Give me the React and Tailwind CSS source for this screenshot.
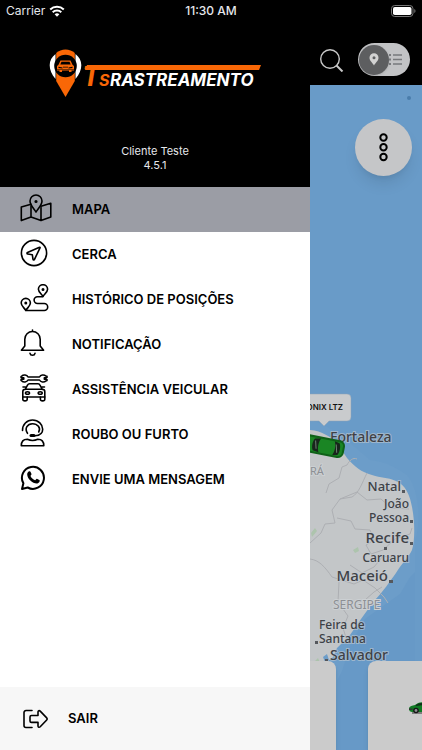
import React, { useState } from 'react';
import clsx from 'clsx';

const Icon = ({ children }) => (
  <svg
    viewBox="0 0 32 28"
    className="mb-1 h-7 w-8 shrink-0"
    fill="none"
    stroke="currentColor"
    strokeWidth="1.6"
    strokeLinecap="round"
    strokeLinejoin="round"
    aria-hidden="true"
  >
    {children}
  </svg>
);

const MapIcon = () => (
  <Icon>
    <path d="M11 10.3 1.3 13v13.6L11 23l10 3.6L30.8 23V9.3L21 12.3M11 12v11M21 13.5v13" />
    <path d="M16 18c-1.8-3-6-6.800-6-11a6 6 0 0 1 12 0c0 4.200-4.200 8-6 11z" />
    <circle cx="16" cy="7.500" r=".8" fill="currentColor" />
  </Icon>
);

const FenceIcon = () => (
  <Icon>
    <circle cx="14" cy="14" r="12.600" />
    <path d="M19.500 8.300 7.500 13.500c-.8.4-.6 1.400.2 1.500l4.600.7.700 4.600c.2.800 1.200.9 1.500.1l5.500-11.600c.2-.4-.1-.7-.5-.5z" />
  </Icon>
);

const RouteIcon = () => (
  <Icon>
    <path d="M23 12.500c-1.300-2.300-4.600-4.400-4.600-7.200a4.600 4.600 0 0 1 9.200 0c0 2.800-3.300 4.900-4.600 7.200z" />
    <path d="M5.800 26.500C4.500 24 1.200 22 1.200 19a4.600 4.600 0 0 1 9.200 0c0 3-3.300 5-4.600 7.500z" />
    <path d="M22.500 12.700h-5a3.400 3.400 0 0 0 0 6.800h6.700a3.500 3.500 0 0 1 0 7H6" />
    <circle cx="23" cy="5.500" r=".7" fill="currentColor" />
    <circle cx="5.800" cy="19" r=".7" fill="currentColor" />
  </Icon>
);

const BellIcon = () => (
  <Icon>
    <path d="M12.500 1v1.500M4.800 17v-6.800c0-4.300 3.400-7.700 7.700-7.700s7.700 3.400 7.700 7.700V17l3.400 4.200H1.400L4.800 17z" />
    <path d="M10 24.300c.5 2.600 4.500 2.600 5 0" />
  </Icon>
);

const AssistIcon = () => (
  <Icon>
    <path
      strokeWidth="1.500"
      d="M8 3h11.500c1-2.200 4.500-2.700 6.500-.9 1.500 0 1.500 1.600.3 1.600h-2v1.600h2c1.200 0 1.200 1.600-.3 1.600-2 1.800-5.500 1.300-6.500-.9H8C7 8.200 3.500 8.700 1.700 6.900c-1.200-.4-.9-1.600.1-1.600h2V3.700h-2c-1 0-1.300-1.200-.1-1.600C3.500.3 7 .8 8 3z"
    />
    <path d="m5.200 15.300 2.300-4.200c.5-.9 1-1.400 2-1.400h8.500c1 0 1.600.5 2 1.400l2.300 4.200M2.800 23v-5.300c0-1.400.9-2.400 2.400-2.400h17.100c1.500 0 2.500 1 2.500 2.400V23h-22zM3 13h2.500M22 13h2.500" />
    <path d="M2.800 23v2.200c0 2.200 4.400 2.200 4.400 0V23M20.400 23v2.200c0 2.200 4.400 2.200 4.400 0V23" />
    <ellipse cx="7.500" cy="19" rx="2" ry="1.300" />
    <ellipse cx="20.200" cy="19" rx="2" ry="1.300" />
  </Icon>
);

const SupportIcon = () => (
  <Icon>
    <path d="M2.500 11.500C2.300 5.500 7 1 12.500 1c6 0 10.200 4.500 10.200 9.300 0 3.700-3 6.200-7.700 6.500" />
    <path d="M7.500 14.300C4.200 9.500 7.500 4.700 12.500 4.700s8.700 4.300 6.200 8.300" />
    <path d="M11 16.500h3" strokeWidth="3" />
    <path d="M1.300 26.700c0-4.200 2-6.400 6-6.400 3 1.300 7.500 1.300 10.500 0 4 0 6 2.200 6 6.400H1.300z" />
  </Icon>
);

const WhatsIcon = () => (
  <Icon>
    <path strokeWidth="2" d="M2 25 3.400 19.300A11 11 0 1 1 7.700 23.500L2 25z" />
    <path
      fill="currentColor"
      stroke="none"
      d="M8.700 7.600c.6-.6 1.500-.6 1.800.2l1 2.300c.2.600-.9 1.500-1 1.900.9 2 2.500 3.500 4.600 4.200.5 0 1.300-1.600 1.800-1.400l2.400 1.200c1.200.6-.2 3.200-2 3.400-4.500.4-10-4.700-10.100-9 0-1.200.6-2.100 1.500-2.800z"
    />
  </Icon>
);

const menuItems = [
  { id: 'mapa', label: 'MAPA', icon: MapIcon },
  { id: 'cerca', label: 'CERCA', icon: FenceIcon },
  { id: 'historico', label: 'HISTÓRICO DE POSIÇÕES', icon: RouteIcon },
  { id: 'notificacao', label: 'NOTIFICAÇÃO', icon: BellIcon },
  { id: 'assistencia', label: 'ASSISTÊNCIA VEICULAR', icon: AssistIcon },
  { id: 'roubo', label: 'ROUBO OU FURTO', icon: SupportIcon },
  { id: 'mensagem', label: 'ENVIE UMA MENSAGEM', icon: WhatsIcon },
];

const cities = [
  { name: 'Natal', x: 91, y: 406, size: 13, anchor: 'end' },
  { name: 'João', x: 99, y: 423, size: 12, anchor: 'end' },
  { name: 'Pessoa', x: 99, y: 437, size: 12, anchor: 'end' },
  { name: 'Recife', x: 99, y: 458, size: 15, anchor: 'end' },
  { name: 'Caruaru', x: 99, y: 477, size: 12, anchor: 'end' },
  { name: 'Maceió', x: 78, y: 496, size: 15, anchor: 'end' },
  { name: 'Fortaleza', x: 20, y: 357, size: 14, anchor: 'start' },
  { name: 'Feira de', x: 9, y: 544, size: 12, anchor: 'start' },
  { name: 'Santana', x: 9, y: 558, size: 12, anchor: 'start' },
  { name: 'Salvador', x: 20, y: 575, size: 14, anchor: 'start' },
];

const StatusBar = () => (
  <div className="grid h-[22px] grid-cols-3 items-center px-[6px] text-xs text-gray-200">
    <div className="flex items-center gap-1">
      <span>Carrier</span>
      <svg viewBox="0 0 16 12" className="h-3 w-4" fill="none" stroke="white" strokeWidth="2" aria-hidden="true">
        <path d="M1.200 4.500a9.800 9.800 0 0 1 13.600 0M3.700 7.200a6.200 6.200 0 0 1 8.600 0" />
        <path d="M8 11.800 5.600 9.300a3.500 3.500 0 0 1 4.800 0z" fill="white" stroke="none" />
      </svg>
    </div>
    <span className="text-center font-medium">11:30 AM</span>
    <svg viewBox="0 0 25 12" className="h-3 w-[25px] justify-self-end" aria-hidden="true">
      <rect x=".5" y=".5" width="21.500" height="11" rx="3.200" fill="none" stroke="#777" />
      <rect x="2" y="2" width="18.500" height="8" rx="1.800" fill="white" />
      <path d="M23.300 4v4c1.600-.7 1.600-3.300 0-4z" fill="#777" />
    </svg>
  </div>
);

const Logo = () => (
  <svg viewBox="0 0 212 48" className="h-12 w-[212px]" role="img" aria-label="TS Rastreamento">
    <path d="M6.500 5C-1 11-1.500 20 6.500 30zM26.500 5c7.500 6 8 15 0 25z" fill="white" />
    <path d="M7.200 4C12-.7 21-.7 25.800 4v28L16.500 48 7.200 32z" fill="#f96706" />
    <circle cx="16.500" cy="17" r="11.300" fill="black" />
    <path
      d="M11.500 11.500h10l2 4.200 1.500 1.300v4.500h-2.500V23H20v-1.500h-7V23h-2.500v-1.500H8V17l1.500-1.300 2-4.200z"
      fill="#f96706"
    />
    <path d="M12.500 12.800h8l1.200 2.600H11.300zM9.500 17.700l4 .8v1l-4-.5zM23.500 17.700l-4 .8v1l4-.5zM14 17.800h5v.8h-5zM8 20.200h17v.6H8z" fill="black" />
    <path d="M38 16h174l-2 5H36z" fill="#f96706" />
    <g fontFamily="Inter, 'Liberation Sans', sans-serif" fontStyle="italic" fontWeight="700">
      <text x="33" y="37" fontSize="27" fill="#f96706">T</text>
      <text x="50" y="37" fontSize="16" fill="#f96706">S</text>
      <text x="61" y="37" fontSize="17" fill="white">RASTREAMENTO</text>
    </g>
  </svg>
);

const MapView = () => (
  <svg
    viewBox="0 0 112 665"
    preserveAspectRatio="xMinYMin slice"
    className="absolute inset-0 h-full w-full"
    fontFamily="'Noto Sans', 'Open Sans', sans-serif"
    role="img"
    aria-label="Mapa"
  >
    <rect width="112" height="665" fill="#6c9dc9" />
    <path
      d="M112 480 100 492l-10 17-17 12-18 13-14 24-9 28-5 10-2 89h87z"
      fill="#6799c7"
    />
    <path d="M0 335c25 6 50 32 60 40 18 2 26 8 37 15 13 15 14 50 8 65v210H112V0H0z" fill="#699bc8" />
    <path
      d="M0 345c12 1 21 7 27 13l10 15c8 9 14 14 25 17 9 3 15 2 24 6 10 4 14 15 16 26 3 15 3 33 0 43-4 8-10 13-16 23-6 8-13 19-22 28l-13 18-11 16-13 13-4 9-5 4-18 1z"
      fill="#c3c6c8"
    />
    <g fill="none" stroke="#adafb3" strokeWidth="1">
      <path d="M47 374c-4-2-8 2-10 6l-5 2-3 11-10 6-3 9M57 388c-5 10-8 20-15 24l-12 2-8 11 3 13-10 1-4 9-11 10M30 414l17-7 10 8 14-1 10 9 18 1M27 433l14 3 4 8 15 1 4 10-8 5 5 9 12-4 12-11 15-5 2-6" />
      <path d="M0 474c9 1 15 8 22 18l22 7 9-4 12 8 9 9 4 6M29 497l-1 20 10 14-5 12 5 16M55 515l9-8 8-5M40 480l12 8 12-6 9-11 11 2" />
    </g>
    <path d="m1 448 4-5 2 3-5 6zM43 465l5-3 1 4-4 2zM2 579l6-6 3 7-5 5z" fill="#adc4ad" />
    <path d="m13 572 4-3 2 6-4 2z" fill="#6c9dc9" />
    <g fill="#8c8f94" stroke="#ccd0d3" strokeWidth="2" paintOrder="stroke">
      <text x="23" y="524" fontSize="12">SERGIPE</text>
      <text x="0" y="390" fontSize="11">RÁ</text>
    </g>
    <g fill="#55585d">
      <rect x="92" y="405" width="3" height="3" />
      <rect x="100" y="435" width="3" height="3" />
      <rect x="100" y="457" width="3" height="3" />
      <rect x="74" y="462" width="3" height="3" />
      <rect x="79" y="495" width="4" height="3" />
      <rect x="5" y="556" width="3" height="3" />
      <rect x="15" y="574" width="3" height="3" />
    </g>
    <g fill="#3e4146" fontWeight="500" stroke="#c3cad0" strokeOpacity=".6" strokeWidth="2" paintOrder="stroke">
      {cities.map((city) => (
        <text key={city.name} x={city.x} y={city.y} fontSize={city.size} textAnchor={city.anchor}>
          {city.name}
        </text>
      ))}
    </g>

    {/* Vehicle seen from above */}
    <g transform="rotate(11 18 360)">
      <rect x="-14" y="353" width="49" height="18" rx="6" fill="#0f6118" />
      <rect x="-10" y="355" width="43" height="14" rx="4" fill="#1a8524" />
      <path d="m4 356 6-1c-2 4-2 10 0 14l-6-1c-2-3-2-9 0-12zM24 355l5 1c2 3 2 9 0 12l-5 1c2-4 2-10 0-14z" fill="#17251b" />
      <path d="m5 358 2 8M26 358l2 8" stroke="#6d7d72" />
    </g>

    <path
      d="M-30 309h67a4 4 0 0 1 4 4v19a4 4 0 0 1-4 4H19l-5 5-5-5h-39z"
      fill="#c9cbcd"
      stroke="#8fa3b5"
      strokeWidth=".5"
    />
    <text x="33" y="325" fontSize="8" fontWeight="600" textAnchor="end" fontFamily="Inter, 'Liberation Sans', sans-serif" fill="#111">
      ONIX LTZ
    </text>
    <circle cx="99" cy="13" r="2" fill="#4a7dab" />
  </svg>
);

const App = () => {
  const [active, setActive] = useState('mapa');
  const [listView, setListView] = useState(false);

  return (
    <div className="flex min-h-screen flex-col bg-black font-['Inter','Liberation_Sans',sans-serif]">
      <StatusBar />

      <div className="flex flex-1">
        {/* Drawer */}
        <aside className="flex flex-1 flex-col bg-white">
          <div className="flex flex-col items-center bg-black pt-[27px] pb-[15px]">
            <Logo />
            <div className="mt-[47px] text-center text-[11px] leading-[14px] text-gray-200">
              <p>Cliente Teste</p>
              <p>4.5.1</p>
            </div>
          </div>

          <nav className="flex-1">
            {menuItems.map((item) => {
              const ItemIcon = item.icon;
              return (
                <button
                  key={item.id}
                  type="button"
                  onClick={() => setActive(item.id)}
                  className={clsx(
                    'flex h-[45px] w-full items-center gap-5 pl-5 text-left text-[13px] font-semibold text-black',
                    active === item.id && 'bg-[#9b9da5]'
                  )}
                >
                  <ItemIcon />
                  {item.label}
                </button>
              );
            })}
          </nav>

          <button
            type="button"
            className="flex h-[63px] w-full items-center gap-5 bg-[#f7f7f7] pl-[23px] text-left text-[13px] font-semibold text-black"
          >
            <svg
              viewBox="0 0 25 20"
              className="h-5 w-[25px]"
              fill="none"
              stroke="currentColor"
              strokeWidth="1.6"
              strokeLinecap="round"
              strokeLinejoin="round"
              aria-hidden="true"
            >
              <path d="M9 1.500H3a2 2 0 0 0-2 2v13a2 2 0 0 0 2 2h6" />
              <path d="M8.500 6.500H15V3c0-1.500 1.300-1.800 2.200-.9l6.500 6.800c.6.600.6 1.500 0 2.100l-6.500 6.800c-.9.900-2.200.600-2.200-.9v-3.500H8.500c-1 0-1.500-.5-1.500-1.500V8c0-1 .5-1.500 1.500-1.500z" />
            </svg>
            SAIR
          </button>
        </aside>

        {/* Map screen behind the drawer */}
        <main className="flex w-28 shrink-0 flex-col">
          <div className="flex h-[63px] items-center justify-between pt-3 pr-3 pl-[10px]">
            <button type="button" aria-label="Buscar">
              <svg viewBox="0 0 24 24" className="h-6 w-6" fill="none" stroke="#c8c8c8" strokeWidth="1.4">
                <circle cx="10" cy="11" r="9.300" />
                <path d="m16.500 17.500 6 6" strokeWidth="2" />
              </svg>
            </button>
            <label className="relative flex h-[33px] w-[52px] items-center rounded-full bg-[#c2c3c5] p-px">
              <input
                type="checkbox"
                className="sr-only"
                aria-label="Ver em lista"
                checked={listView}
                onChange={() => setListView(!listView)}
              />
              <span className="flex h-[30px] w-[30px] items-center justify-center rounded-full bg-[#5d5e60] shadow">
                <svg viewBox="0 0 10 13" className="h-[13px] w-[10px]" aria-hidden="true">
                  <path d="M5 12.500C3.800 10 .5 8 .5 4.800a4.500 4.500 0 0 1 9 0C9.500 8 6.200 10 5 12.500z" fill="#d2d2d2" />
                  <circle cx="5" cy="4.800" r="1.500" fill="#5d5e60" />
                </svg>
              </span>
              <svg viewBox="0 0 13 11" className="h-[11px] w-[13px]" fill="#77797c" aria-hidden="true">
                <path d="M0 0h2v2H0zM4 .3h9v1.400H4zM0 4.500h2v2H0zM4 4.800h9v1.400H4zM0 9h2v2H0zM4 9.300h9v1.400H4z" />
              </svg>
            </label>
          </div>

          <div className="relative flex-1 overflow-hidden">
            <MapView />
            <button
              type="button"
              aria-label="Mais opções"
              className="absolute top-[34px] right-[10px] flex h-[57px] w-[57px] items-center justify-center rounded-full bg-[#c5c6c8] shadow-lg"
            >
              <svg viewBox="0 0 10 30" className="h-[30px] w-[10px]" fill="none" stroke="black" strokeWidth="2">
                <circle cx="4.500" cy="4.500" r="3.200" />
                <circle cx="4.500" cy="14.200" r="3.200" />
                <circle cx="4.500" cy="24" r="3.200" />
              </svg>
            </button>
            <div className="absolute bottom-0 left-0 h-[89px] w-[26px] rounded-tr-lg bg-[#cbcbcb] shadow-md" />
            <div className="absolute right-0 bottom-0 h-[89px] w-[54px] rounded-tl-lg bg-[#cbcbcb] pt-[41px] shadow-md">
              <svg viewBox="0 0 13 12" className="ml-auto h-3 w-[13px]" aria-hidden="true">
                <path d="M0 6c1-2 3-2.500 6-3 2-1.500 4-2.500 7-2.700V10H4C1 10 0 9 0 6z" fill="#0f7a23" />
                <path d="M6.500 3.300C8 2 10 1.200 13 1v2.200l-6 .8z" fill="#10301a" />
                <path d="M0 6.500h3.500V8H0zM3 10.500h10v1H3z" fill="#333" />
                <circle cx="7" cy="8.500" r="2.800" fill="#151515" />
                <circle cx="7" cy="8.500" r="1.400" fill="#8c8f91" />
              </svg>
            </div>
          </div>
        </main>
      </div>
    </div>
  );
};

export default App;
